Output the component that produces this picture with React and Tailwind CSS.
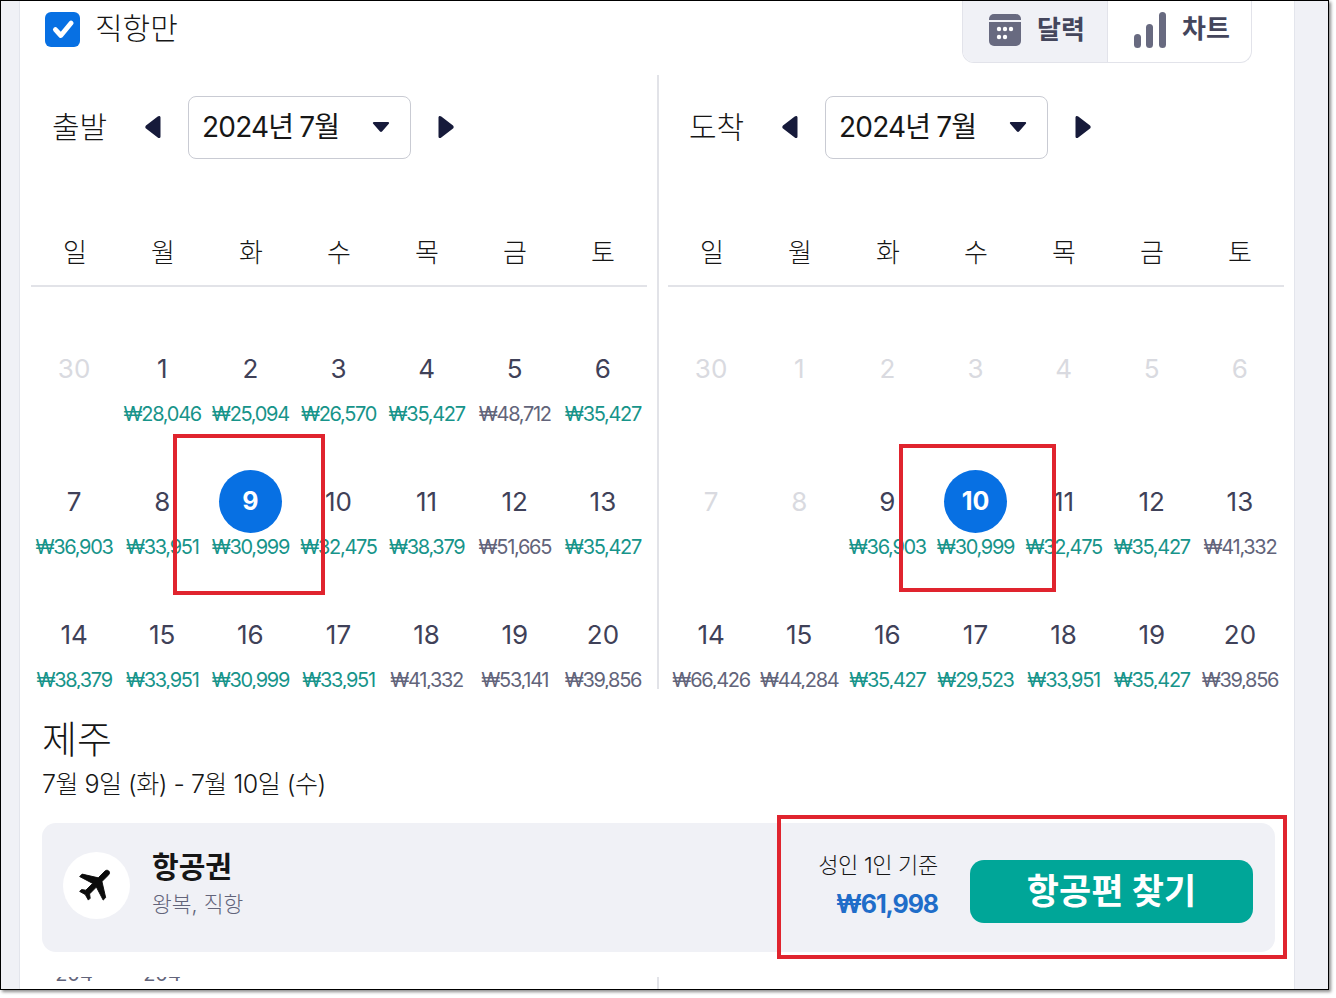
import React from "react";

const font = { fontFamily: '"Inter","Noto Sans CJK KR",sans-serif' };

const depart = [
  [["30", "", 0], ["1", "₩28,046", 1], ["2", "₩25,094", 1], ["3", "₩26,570", 1], ["4", "₩35,427", 1], ["5", "₩48,712", 2], ["6", "₩35,427", 1]],
  [["7", "₩36,903", 1], ["8", "₩33,951", 1], ["9", "₩30,999", 1, true], ["10", "₩32,475", 1], ["11", "₩38,379", 1], ["12", "₩51,665", 2], ["13", "₩35,427", 1]],
  [["14", "₩38,379", 1], ["15", "₩33,951", 1], ["16", "₩30,999", 1], ["17", "₩33,951", 1], ["18", "₩41,332", 2], ["19", "₩53,141", 2], ["20", "₩39,856", 2]],
];
const arrive = [
  [["30", "", 0], ["1", "", 0], ["2", "", 0], ["3", "", 0], ["4", "", 0], ["5", "", 0], ["6", "", 0]],
  [["7", "", 0], ["8", "", 0], ["9", "₩36,903", 1], ["10", "₩30,999", 1, true], ["11", "₩32,475", 1], ["12", "₩35,427", 1], ["13", "₩41,332", 2]],
  [["14", "₩66,426", 2], ["15", "₩44,284", 2], ["16", "₩35,427", 1], ["17", "₩29,523", 1], ["18", "₩33,951", 1], ["19", "₩35,427", 1], ["20", "₩39,856", 2]],
];
const days = ["일", "월", "화", "수", "목", "금", "토"];

function LeftArrow() {
  return (
    <svg width="18" height="24" viewBox="0 0 18 24">
      <path d="M16.500 2.500v19c0 1.600-1.700 2-2.800.9L2 13.600c-.9-.9-.9-2.300 0-3.200L13.700 1.600c1.100-1.100 2.800-.7 2.800.9z" fill="#161a3a" />
    </svg>
  );
}
function RightArrow() {
  return (
    <svg width="18" height="24" viewBox="0 0 18 24">
      <path d="M1.500 2.500v19c0 1.600 1.700 2 2.800.9L16 13.600c.9-.9.9-2.300 0-3.200L4.300 1.600C3.200.5 1.500.9 1.500 2.500z" fill="#161a3a" />
    </svg>
  );
}

function Cell({ d }) {
  const [num, price, kind, selected] = d;
  return (
    <div className="flex flex-col items-center">
      <div className="flex h-[63px] w-[63px] items-center justify-center">
        {selected ? (
          <div className="flex h-[63px] w-[63px] items-center justify-center rounded-full bg-[#0770e3] text-[25px] font-bold text-white">{num}</div>
        ) : (
          <span className={kind === 0 ? "text-[26px] text-[#d9dae0]" : "text-[26px] text-[#3f4158]"}>{num}</span>
        )}
      </div>
      <div className={kind === 2 ? "h-[28px] whitespace-nowrap text-[20px] leading-[28px] tracking-[-1.300px] text-[#62647a]" : "h-[28px] whitespace-nowrap text-[20px] leading-[28px] tracking-[-1.300px] text-[#17948a]"}>{price}</div>
    </div>
  );
}

function Calendar({ label, rows }) {
  return (
    <div className="w-[616px]">
      <div className="flex h-[62px] items-center pl-[21px]">
        <span className="w-[92px] text-[30px] font-light text-[#161616]">{label}</span>
        <LeftArrow />
        <div className="ml-[26px] flex h-[63px] w-[223px] items-center justify-between rounded-[8px] border border-[#c9cbd3] bg-white pl-[14px] pr-[20px]">
          <span className="-ml-[1px] text-[28px] tracking-[-0.800px] text-[#161616] [word-spacing:-1px]">2024년 7월</span>
          <svg width="18" height="12" viewBox="0 0 18 12"><path d="M2 1h14c1 0 1.500 1 .8 1.800L10 10.500c-.5.6-1.500.6-2 0L1.200 2.800C.5 2 1 1 2 1z" fill="#161a3a" /></svg>
        </div>
        <div className="ml-[26px]"><RightArrow /></div>
      </div>
      <div className="mt-[77px] grid h-[52px] grid-cols-7 border-b-2 border-[#e2e3e8] pb-[14px]">
        {days.map((x) => (
          <div key={x} className="text-center text-[26px] font-light leading-[36px] text-[#161616]">{x}</div>
        ))}
      </div>
      <div className="-ml-[1px] pt-[50px]">
        {rows.map((r, i) => (
          <div key={i} className="grid h-[133px] grid-cols-7">
            {r.map((d, j) => <Cell key={j} d={d} />)}
          </div>
        ))}
      </div>
    </div>
  );
}

export default function App() {
  return (
    <div className="relative h-[998px] w-[1336px] overflow-hidden bg-white" style={font}>
      <div className="h-[990px] w-[1329px] border border-black bg-[#f0f1f6] pl-[18px] shadow-[2px_2px_3px_rgba(0,0,0,0.45)]">
        <div className="h-[988px] w-[1276px] overflow-hidden border-x border-[#e3e5ec] bg-white">
          <div className="h-[688px] overflow-hidden">
            <div className="flex h-[74px] items-start justify-between pl-[25px] pr-[42px]">
              <div className="flex items-center pt-[6px]">
                <div className="flex h-[35px] w-[35px] items-center justify-center rounded-[6px] bg-[#0770e3]">
                  <svg width="26" height="26" viewBox="0 0 24 24" fill="none"><path d="M5 12.500l5 5.500L19.500 6.500" stroke="#fff" strokeWidth="4.500" strokeLinecap="round" strokeLinejoin="round" /></svg>
                </div>
                <span className="ml-[15px] -mt-[1px] text-[30px] font-light text-[#161616]">직항만</span>
              </div>
              <div className="flex h-[62px] w-[290px] overflow-hidden rounded-b-[12px] border border-t-0 border-[#e2e3ea]">
                <div className="flex w-[145px] items-center gap-[16px] border-r border-[#e2e3ea] bg-[#f0f1f6] pl-[26px]">
                  <svg className="-mt-[4px]" width="32" height="32" viewBox="0 0 32 32">
                    <path d="M5 0h22a5 5 0 0 1 5 5v1H0V5a5 5 0 0 1 5-5z" fill="#686a80" />
                    <path d="M0 8h32v19a5 5 0 0 1-5 5H5a5 5 0 0 1-5-5z" fill="#686a80" />
                    <g fill="#fff">
                      <circle cx="10" cy="15" r="2.200" /><circle cx="16" cy="15" r="2.200" /><circle cx="22" cy="15" r="2.200" />
                      <circle cx="10" cy="23" r="2.200" /><circle cx="16" cy="23" r="2.200" />
                    </g>
                  </svg>
                  <span className="-mt-[4px] text-[26px] font-bold text-[#44465c]">달력</span>
                </div>
                <div className="flex flex-1 items-center gap-[16px] pl-[26px]">
                  <svg className="-mt-[4px]" width="32" height="36" viewBox="0 0 32 36">
                    <rect x="0" y="22" width="7" height="14" rx="3.500" fill="#686a80" />
                    <rect x="12" y="12" width="7" height="24" rx="3.500" fill="#686a80" />
                    <rect x="25" y="0" width="7" height="36" rx="3.500" fill="#686a80" />
                  </svg>
                  <span className="-mt-[6px] text-[26px] font-bold text-[#44465c]">차트</span>
                </div>
              </div>
            </div>
            <div className="flex pl-[11px] pt-[21px]">
              <Calendar label="출발" rows={depart} />
              <div className="relative w-[21px]">
                <div className="absolute -top-[21px] left-[10px] h-[700px] w-[2px] bg-[#e2e3e8]" />
              </div>
              <Calendar label="도착" rows={arrive} />
            </div>
          </div>

          <div className="h-[288px] bg-white pl-[22px] pr-[19px] pt-[23px]">
            <h2 className="text-[38px] font-light leading-[54px] text-[#161616]">제주</h2>
            <p className="text-[25px] font-light leading-[36px] tracking-[-0.500px] text-[#161616]">7월 9일 (화) - 7월 10일 (수)</p>
            <div className="mt-[21px] flex h-[129px] items-center justify-between rounded-[14px] bg-[#f0f1f6] pl-[21px] pr-[22px]">
              <div className="flex items-center gap-[22px]">
                <div className="-mt-[5px] flex h-[67px] w-[67px] items-center justify-center rounded-full bg-white">
                  <svg className="-mt-[2px] ml-[1px] rotate-45" width="42" height="42" viewBox="0 0 24 24"><path d="M21 16v-2l-8-5V3.500c0-.83-.67-1.500-1.500-1.500S10 2.670 10 3.500V9l-8 5v2l8-2.500V19l-2 1.500V22l3.500-1 3.500 1v-1.500L13 19v-5.500l8 2.500z" fill="#0b0b0b" stroke="#0b0b0b" strokeWidth="0.500" /></svg>
                </div>
                <div className="-mt-[4px]">
                  <div className="-mt-[2px] text-[29px] font-bold leading-[36px] text-[#161616]">항공권</div>
                  <div className="mt-[2px] text-[21.500px] font-light leading-[32px] text-[#62647a]">왕복, 직항</div>
                </div>
              </div>
              <div className="flex items-center gap-[32px]">
                <div className="-mt-[1px] text-right">
                  <div className="-mt-[2px] text-[22px] font-light leading-[34px] tracking-[-0.300px] text-[#161616]">성인 1인 기준</div>
                  <div className="mt-[2px] text-[25px] font-bold leading-[40px] tracking-[-1.100px] text-[#1f6dc9]">₩61,998</div>
                </div>
                <button className="mt-[7px] flex h-[63px] w-[283px] items-center justify-center rounded-[14px] bg-[#00a698] text-[35px] font-bold text-white">항공편 찾기</button>
              </div>
            </div>
          </div>

          <div className="relative h-[12px] overflow-hidden pl-[10px]">
            <div className="grid w-[616px] grid-cols-7">
              <div className="-mt-[13px] text-center text-[20px] leading-[20px] text-[#62647a]">204</div>
              <div className="-mt-[13px] text-center text-[20px] leading-[20px] text-[#62647a]">204</div>
            </div>
            <div className="absolute left-[637px] top-0 h-[12px] w-[2px] bg-[#e2e3e8]" />
          </div>
        </div>
      </div>

      <div className="absolute left-[173px] top-[434px] h-[161px] w-[152px] border-4 border-[#e0242e]" />
      <div className="absolute left-[899px] top-[444px] h-[148px] w-[157px] border-4 border-[#e0242e]" />
      <div className="absolute left-[777px] top-[815px] h-[144px] w-[510px] border-4 border-[#e0242e]" />
    </div>
  );
}
